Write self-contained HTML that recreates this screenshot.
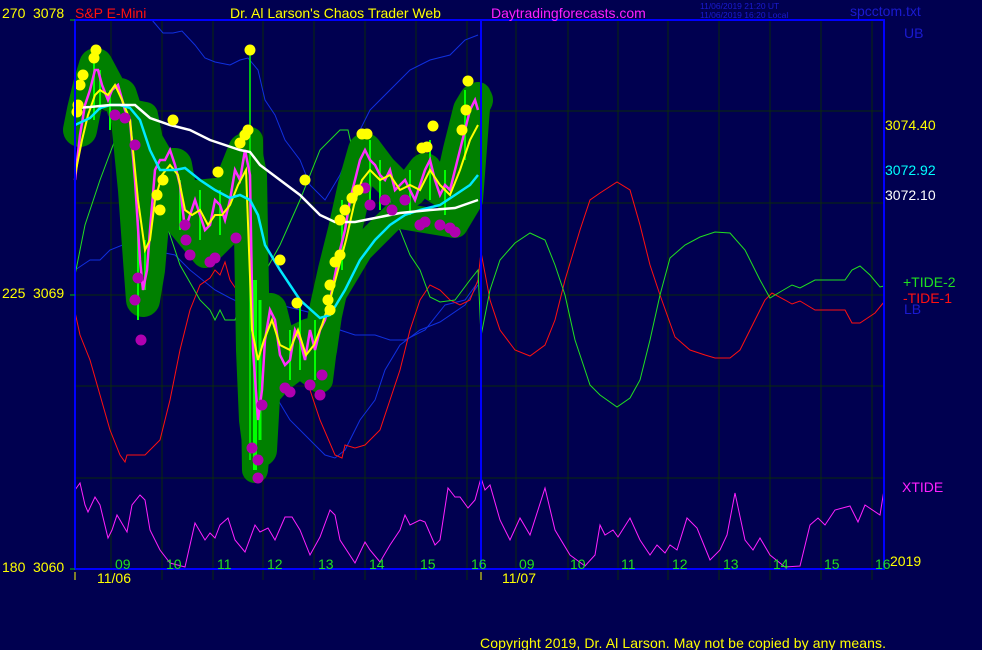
<!DOCTYPE html>
<html><head><meta charset="utf-8"><style>
html,body{margin:0;padding:0;background:#000050;}
body{width:982px;height:650px;overflow:hidden;position:relative;font-family:"Liberation Sans",sans-serif;}
svg{position:absolute;left:0;top:0;}
</style></head><body>
<svg width="982" height="650" viewBox="0 0 982 650" xmlns="http://www.w3.org/2000/svg" font-family="Liberation Sans, sans-serif">
<rect width="982" height="650" fill="#000050"/>
<g stroke="#0a2a0a" stroke-width="1">
<line x1="111" y1="20" x2="111" y2="580"/><line x1="162" y1="20" x2="162" y2="580"/><line x1="213" y1="20" x2="213" y2="580"/><line x1="263" y1="20" x2="263" y2="580"/><line x1="314" y1="20" x2="314" y2="580"/><line x1="365" y1="20" x2="365" y2="580"/><line x1="416" y1="20" x2="416" y2="580"/><line x1="467" y1="20" x2="467" y2="580"/>
<line x1="516" y1="20" x2="516" y2="580"/><line x1="568" y1="20" x2="568" y2="580"/><line x1="618" y1="20" x2="618" y2="580"/><line x1="668" y1="20" x2="668" y2="580"/><line x1="719" y1="20" x2="719" y2="580"/><line x1="770" y1="20" x2="770" y2="580"/><line x1="821" y1="20" x2="821" y2="580"/><line x1="872" y1="20" x2="872" y2="580"/>
<line x1="75" y1="111" x2="884" y2="111"/><line x1="75" y1="203" x2="884" y2="203"/><line x1="75" y1="295" x2="884" y2="295"/><line x1="75" y1="386" x2="884" y2="386"/><line x1="75" y1="478" x2="884" y2="478"/>
</g>
<g fill="none" stroke="#1030e0" stroke-width="1">
<polyline points="152,20 163,33 173,33 182,31 195,45 205,58 215,62 230,65 240,60 248,58 258,70 265,100 275,115 285,140 300,160 310,185 325,200 340,175 355,140 370,110 395,85 410,70 430,60 450,55 465,40 478,35"/>
<polyline points="75,270 90,260 100,260 110,250 130,242 150,242 160,252 175,255 190,270 200,278 215,290 230,298 245,305 260,305 280,305 300,310 320,315 340,330 355,335 375,335 390,340 405,340 425,330 445,305 465,300 478,282"/>
<polyline points="260,360 275,395 290,420 310,440 325,455 335,458 345,450 360,420 375,400 385,370 400,345 420,330 440,322 465,305 478,285"/>
</g>
<polyline fill="none" stroke="#ff1010" stroke-width="1" points="75,312 80,335 90,360 100,395 110,430 120,455 125,462 127,455 145,455 160,440 170,400 180,350 190,310 200,285 210,278 215,270 220,275 225,262 230,280 240,295 250,295 265,320 275,340 290,368 305,375 320,420 335,455 342,458 345,445 355,448 365,445 380,430 390,400 400,370 410,330 420,300 430,285 440,290 450,300 460,305 470,300 478,280 481,252 490,300 500,330 515,350 530,356 545,345 555,320 565,280 580,230 590,200 600,193 617,182 630,190 640,225 650,265 660,295 675,337 690,350 705,355 715,358 730,358 740,350 755,320 765,300 772,293 785,300 792,304 800,301 815,310 845,310 852,323 860,323 875,313 884,302"/>
<polyline fill="none" stroke="#20e020" stroke-width="1" points="75,275 85,225 100,180 115,140 125,120 130,125 140,138 150,175 165,220 180,265 200,300 210,310 215,320 220,310 225,320 235,320 250,275 265,272 280,245 300,200 320,150 340,130 348,130 352,148 360,140 375,148 390,200 400,230 410,255 420,270 430,297 440,302 455,300 470,280 478,270 481,336 490,290 500,260 515,243 530,233 545,240 555,265 565,295 575,340 585,370 590,385 600,395 617,407 630,398 640,380 650,340 660,295 670,258 685,245 700,237 715,232 730,233 745,250 760,280 770,298 780,292 792,285 800,288 815,280 845,280 852,270 860,266 870,275 880,287 884,286"/>
<polyline fill="none" stroke="#ff20ff" stroke-width="1" points="75,490 80,483 85,505 88,512 95,497 100,505 108,538 112,530 117,515 120,520 127,532 132,505 140,495 145,500 150,530 160,550 170,563 185,567 195,523 205,540 210,533 215,538 220,525 228,518 235,540 245,552 255,525 260,532 268,528 275,540 285,517 292,517 300,530 310,555 320,537 330,510 335,515 340,540 355,563 365,542 370,550 380,562 390,545 400,530 405,515 410,525 420,520 425,522 435,545 440,540 448,488 455,497 460,497 468,508 475,500 481,478 485,490 490,485 500,520 510,540 520,518 530,535 545,488 555,530 570,555 585,566 595,555 600,525 605,535 613,530 618,537 630,518 640,540 650,555 657,545 665,553 670,545 677,550 687,518 697,528 710,560 720,550 727,535 735,493 745,540 753,550 760,538 770,555 785,567 800,566 810,525 818,518 825,525 835,510 850,506 858,522 865,505 880,515 884,490"/>
<g fill="none" stroke-linecap="round" stroke-linejoin="round">
<polyline stroke="#008000" stroke-width="34" points="80,130 84,110 90,85 96,65 104,80 112,95 120,95 128,120 135,190 140,260 143,300 148,270 155,190 165,165 175,165 185,220 195,210 205,235 215,210 225,220 235,175 245,150 250,175 253,350 256,420 260,450 264,380 270,310 280,350 290,365 300,340 310,335 320,350 325,315 335,270 345,230 355,185 365,150 380,170 395,185 410,190 425,170 435,185 450,195 460,150 470,110 476,100"/>
<polyline stroke="#008000" stroke-width="26" points="120,110 145,115 150,140 185,200 200,240 230,230 225,190 175,195 180,225 205,255 230,230 250,140 255,470 262,400 280,380 300,365 320,380 330,300 360,250 395,215 425,220 455,225 470,200 478,95"/>
</g>
<g stroke="#00ff00" stroke-width="2">
<line x1="250" y1="50" x2="250" y2="460" stroke-width="1.5"/>
<line x1="255" y1="280" x2="255" y2="470" stroke-width="4"/>
<line x1="260" y1="300" x2="260" y2="440" stroke-width="3"/>
<line x1="94" y1="60" x2="94" y2="120"/><line x1="100" y1="70" x2="100" y2="110"/><line x1="138" y1="220" x2="138" y2="320"/><line x1="145" y1="240" x2="145" y2="290"/>
<line x1="200" y1="190" x2="200" y2="240"/><line x1="300" y1="300" x2="300" y2="370"/><line x1="342" y1="200" x2="342" y2="270"/><line x1="370" y1="140" x2="370" y2="200"/><line x1="430" y1="140" x2="430" y2="200"/><line x1="465" y1="90" x2="465" y2="160"/>
<line x1="110" y1="90" x2="110" y2="130"/><line x1="180" y1="180" x2="180" y2="230"/><line x1="220" y1="190" x2="220" y2="235"/><line x1="290" y1="330" x2="290" y2="380"/><line x1="315" y1="320" x2="315" y2="380"/><line x1="380" y1="160" x2="380" y2="210"/><line x1="410" y1="170" x2="410" y2="215"/><line x1="445" y1="170" x2="445" y2="215"/>
</g>
<polyline fill="none" stroke="#ff30ff" stroke-width="2.5" points="75,180 80,135 85,105 90,90 95,70 98,70 102,85 108,100 112,90 118,85 125,110 130,120 135,180 140,260 143,290 147,270 150,230 155,170 160,160 165,160 170,150 175,165 180,185 185,230 190,215 195,200 200,215 205,230 210,225 215,200 220,205 225,220 230,200 235,170 240,180 245,150 250,175 253,350 258,420 262,390 265,340 270,310 275,320 280,355 285,365 290,360 295,330 300,340 305,360 310,330 315,350 320,330 325,320 330,300 335,275 340,250 345,230 350,200 355,180 360,160 365,150 370,160 375,165 380,175 385,180 390,170 395,190 400,185 405,180 410,190 415,200 420,185 425,170 430,160 435,180 440,195 445,185 450,190 455,170 460,150 465,130 470,110 475,100 478,110"/>
<polyline fill="none" stroke="#ffff00" stroke-width="2" points="75,175 82,140 88,115 95,95 100,90 108,95 115,85 122,100 130,120 138,200 145,250 150,240 155,200 162,175 170,165 178,175 185,210 192,215 200,210 208,225 215,215 222,215 230,205 238,185 246,170 252,330 258,360 264,340 272,320 280,345 290,350 298,330 306,355 314,345 322,325 330,300 338,270 346,240 354,205 362,180 370,170 380,180 390,175 400,190 410,185 420,190 430,170 440,185 450,195 460,170 470,140 478,125"/>
<polyline fill="none" stroke="#00e8ff" stroke-width="2.5" points="75,125 90,118 100,108 110,105 120,105 130,108 140,120 150,150 160,170 175,170 185,168 200,180 215,190 230,198 240,195 250,200 258,215 265,245 280,270 300,300 320,318 330,315 345,290 360,260 375,240 390,225 405,215 420,210 440,205 455,195 470,185 478,175"/>
<polyline fill="none" stroke="#ffffff" stroke-width="2.5" points="75,108 90,107 110,105 135,105 150,118 170,125 190,130 210,140 240,150 250,152 260,165 280,180 300,195 320,215 335,222 355,222 375,218 400,213 430,210 455,208 478,200"/>
<g fill="#b000b0">
<circle cx="141" cy="340" r="5.5"/><circle cx="258" cy="478" r="5.5"/><circle cx="258" cy="460" r="5.5"/><circle cx="252" cy="448" r="5.5"/><circle cx="290" cy="392" r="5.5"/><circle cx="285" cy="388" r="5.5"/><circle cx="320" cy="395" r="5.5"/><circle cx="322" cy="375" r="5.5"/><circle cx="365" cy="188" r="5.5"/><circle cx="370" cy="205" r="5.5"/><circle cx="385" cy="200" r="5.5"/><circle cx="392" cy="210" r="5.5"/><circle cx="420" cy="225" r="5.5"/><circle cx="425" cy="222" r="5.5"/><circle cx="455" cy="232" r="5.5"/><circle cx="450" cy="228" r="5.5"/><circle cx="135" cy="300" r="5.5"/><circle cx="138" cy="278" r="5.5"/><circle cx="215" cy="258" r="5.5"/><circle cx="210" cy="262" r="5.5"/><circle cx="190" cy="255" r="5.5"/><circle cx="186" cy="240" r="5.5"/><circle cx="185" cy="225" r="5.5"/><circle cx="115" cy="115" r="5.5"/><circle cx="125" cy="118" r="5.5"/><circle cx="135" cy="145" r="5.5"/><circle cx="236" cy="238" r="5.5"/><circle cx="405" cy="200" r="5.5"/><circle cx="440" cy="225" r="5.5"/><circle cx="262" cy="405" r="5.5"/><circle cx="310" cy="385" r="5.5"/>
</g>
<g fill="#ffff00">
<circle cx="96" cy="50" r="5.5"/><circle cx="94" cy="58" r="5.5"/><circle cx="83" cy="75" r="5.5"/><circle cx="80" cy="85" r="5.5"/><circle cx="78" cy="105" r="5.5"/><circle cx="77" cy="112" r="5.5"/><circle cx="173" cy="120" r="5.5"/><circle cx="240" cy="143" r="5.5"/><circle cx="245" cy="135" r="5.5"/><circle cx="248" cy="130" r="5.5"/><circle cx="160" cy="210" r="5.5"/><circle cx="157" cy="195" r="5.5"/><circle cx="163" cy="180" r="5.5"/><circle cx="250" cy="50" r="5.5"/><circle cx="297" cy="303" r="5.5"/><circle cx="362" cy="134" r="5.5"/><circle cx="367" cy="134" r="5.5"/><circle cx="358" cy="190" r="5.5"/><circle cx="352" cy="198" r="5.5"/><circle cx="345" cy="210" r="5.5"/><circle cx="340" cy="220" r="5.5"/><circle cx="335" cy="262" r="5.5"/><circle cx="330" cy="285" r="5.5"/><circle cx="328" cy="300" r="5.5"/><circle cx="433" cy="126" r="5.5"/><circle cx="468" cy="81" r="5.5"/><circle cx="466" cy="110" r="5.5"/><circle cx="462" cy="130" r="5.5"/><circle cx="427" cy="147" r="5.5"/><circle cx="422" cy="148" r="5.5"/><circle cx="218" cy="172" r="5.5"/><circle cx="280" cy="260" r="5.5"/><circle cx="340" cy="255" r="5.5"/><circle cx="330" cy="310" r="5.5"/><circle cx="305" cy="180" r="5.5"/>
</g>
<g stroke="#0000ff" stroke-width="2" fill="none">
<rect x="75" y="20" width="809" height="549"/>
<line x1="481" y1="20" x2="481" y2="569"/>
</g>
<g stroke="#ffff00" stroke-width="1"><line x1="75" y1="572" x2="75" y2="580"/><line x1="481" y1="572" x2="481" y2="580"/></g>
<g stroke="#00c000"><line x1="70" y1="20" x2="75" y2="20"/><line x1="70" y1="295" x2="75" y2="295"/><line x1="70" y1="569" x2="75" y2="569"/></g>
<g font-size="14">
<text x="2" y="18" fill="#ffff00">270</text><text x="33" y="18" fill="#ffff00">3078</text>
<text x="75" y="18" fill="#ff1010">S&amp;P E-Mini</text>
<text x="230" y="18" fill="#ffff00">Dr. Al Larson's Chaos Trader Web</text>
<text x="491" y="18" fill="#ff20ff">Daytradingforecasts.com</text>
<text x="850" y="16" fill="#1a1ad0">spcctom.txt</text>
<text x="904" y="38" fill="#1a1ad0">UB</text>
<text x="2" y="298" fill="#ffff00">225</text><text x="33" y="298" fill="#ffff00">3069</text>
<text x="2" y="572" fill="#ffff00">180</text><text x="33" y="572" fill="#ffff00">3060</text>
<text x="885" y="130" fill="#ffff00">3074.40</text>
<text x="885" y="175" fill="#00ffff">3072.92</text>
<text x="885" y="200" fill="#ffffff">3072.10</text>
<text x="903" y="287" fill="#20e020">+TIDE-2</text>
<text x="903" y="303" fill="#ff1010">-TIDE-1</text>
<text x="904" y="314" fill="#1a1ad0">LB</text>
<text x="902" y="492" fill="#ff20ff">XTIDE</text>
<text x="890" y="566" fill="#ffff00">2019</text>
<text x="97" y="583" fill="#ffff00">11/06</text>
<text x="502" y="583" fill="#ffff00">11/07</text>
<text x="480" y="648" fill="#ffff00" textLength="406">Copyright 2019, Dr. Al Larson. May not be copied by any means.</text>
</g>
<g font-size="14" fill="#20e020">
<text x="115" y="569">09</text><text x="166" y="569">10</text><text x="217" y="569">11</text><text x="267" y="569">12</text><text x="318" y="569">13</text><text x="369" y="569">14</text><text x="420" y="569">15</text><text x="471" y="569">16</text>
<text x="519" y="569">09</text><text x="570" y="569">10</text><text x="621" y="569">11</text><text x="672" y="569">12</text><text x="723" y="569">13</text><text x="773" y="569">14</text><text x="824" y="569">15</text><text x="875" y="569">16</text>
</g>
<g font-size="8.5" fill="#1a1ad0">
<text x="700" y="9">11/06/2019 21:20  UT</text>
<text x="700" y="18">11/06/2019 16:20  Local</text>
</g>
</svg>
</body></html>
